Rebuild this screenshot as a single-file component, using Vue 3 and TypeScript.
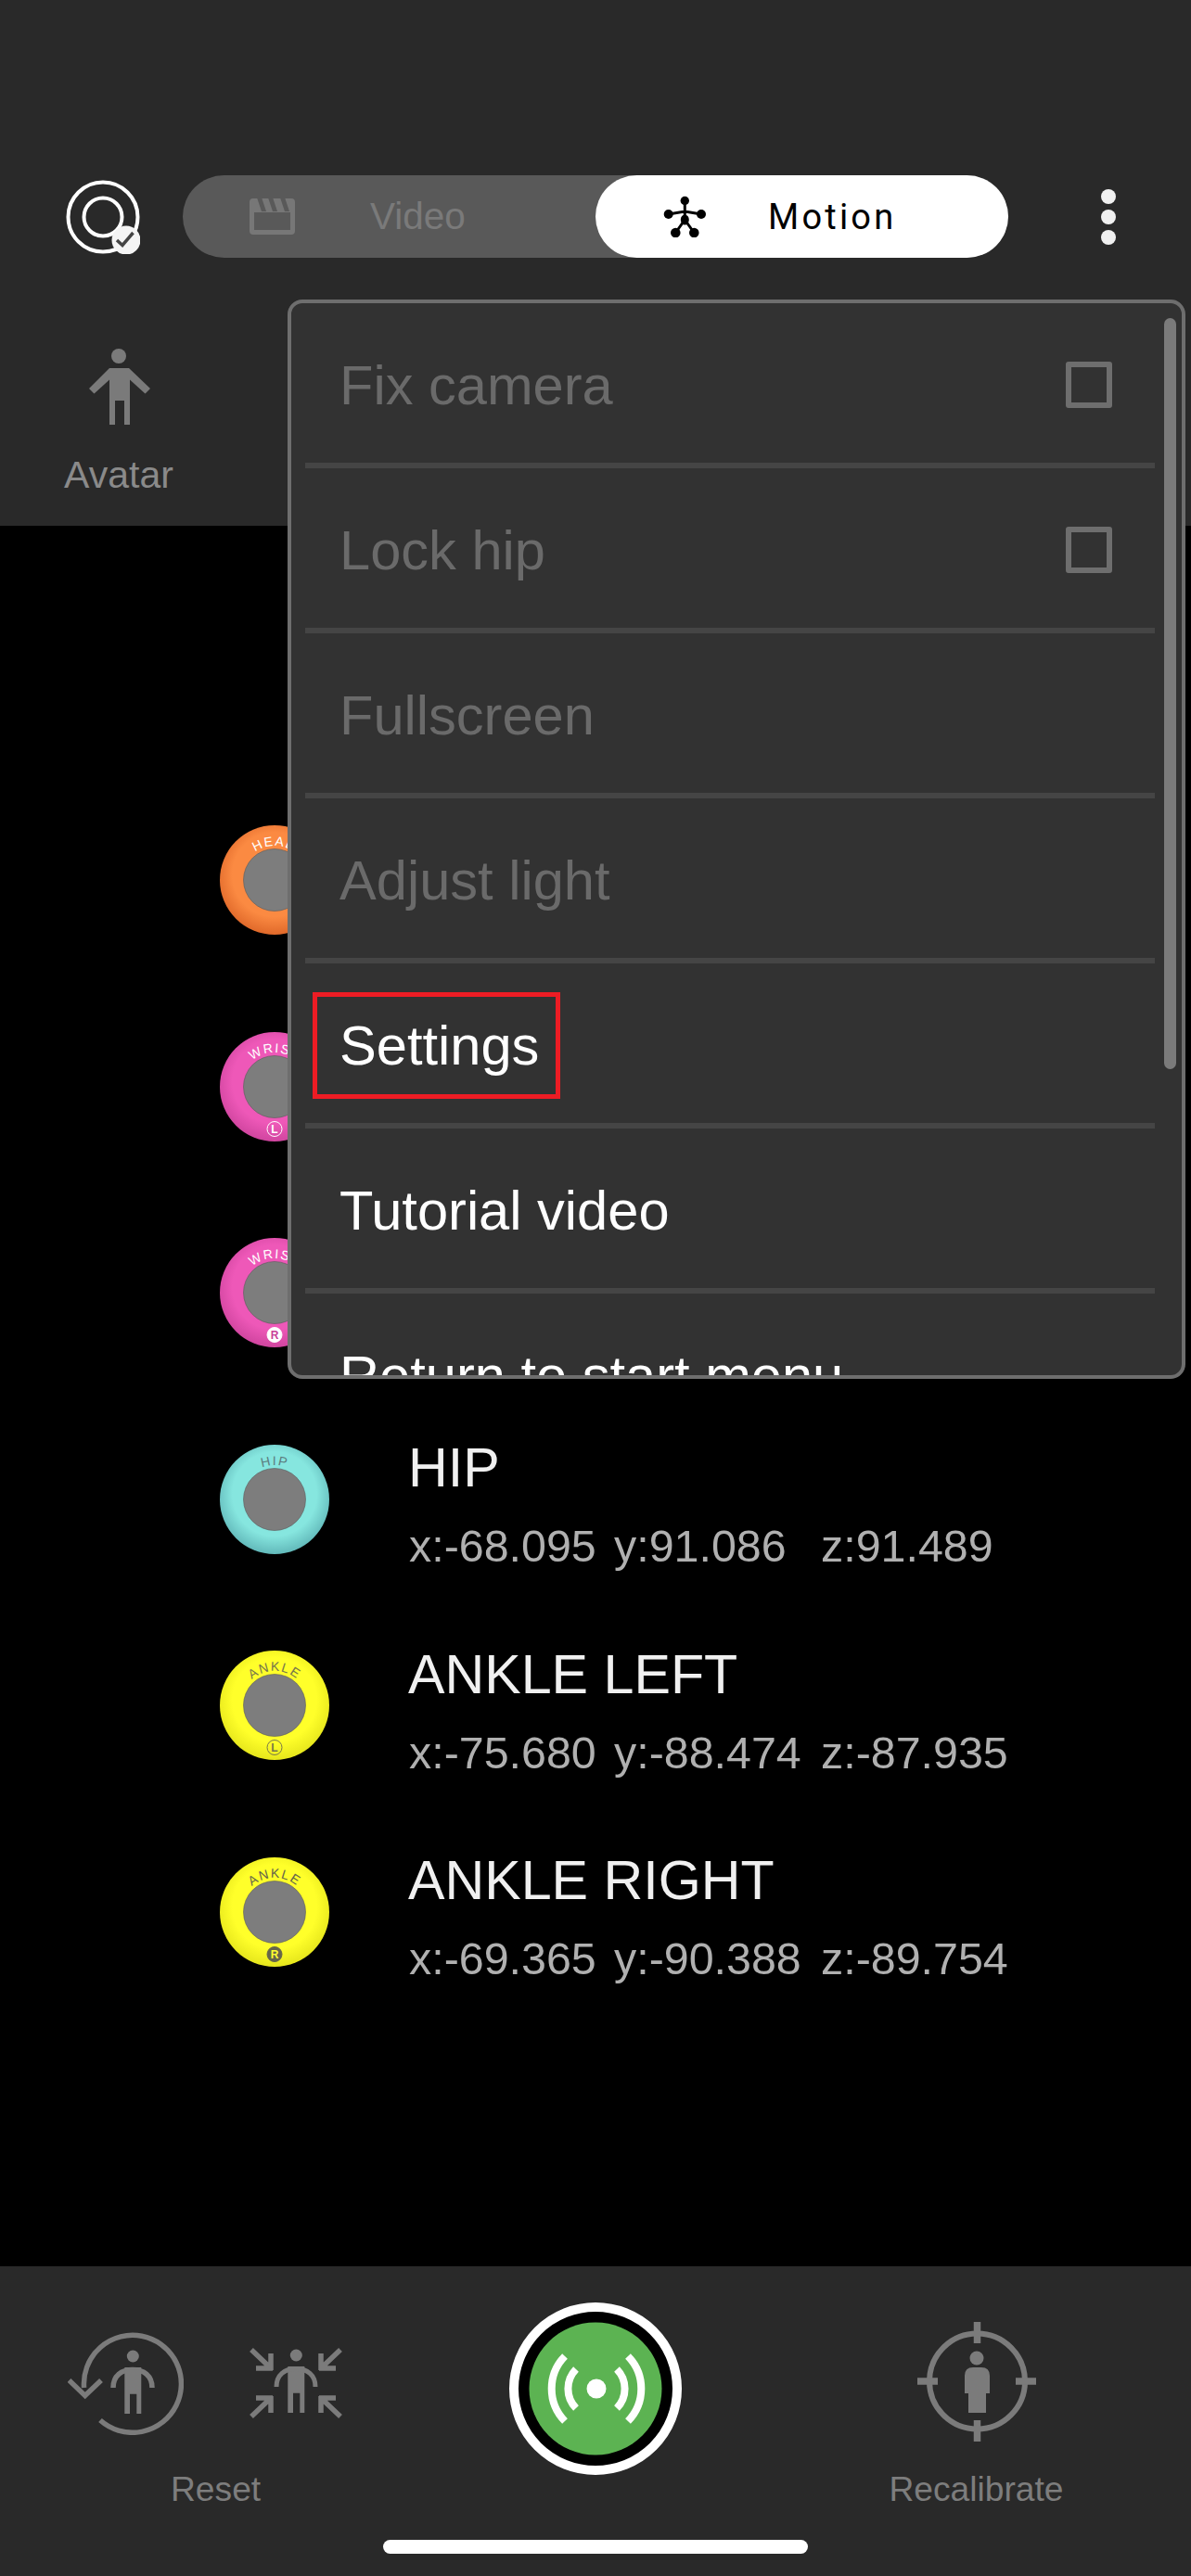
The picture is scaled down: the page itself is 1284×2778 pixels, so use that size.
<script setup lang="ts">
type Sensor = {
  id: string
  name: string
  label: string
  side: string
  coords?: [string, string, string]
  light: string
  edge: string
  ink: string
}

// the first three rows sit under the open menu, so only their pucks show
const sensors: Sensor[] = [
  { id: 'head', name: '', label: 'HEAD', side: '', light: '#fb8a42', edge: '#e0692a', ink: '#ffffff' },
  { id: 'wl', name: '', label: 'WRIST', side: 'L', light: '#ee58b8', edge: '#d0459f', ink: '#ffffff' },
  { id: 'wr', name: '', label: 'WRIST', side: 'R', light: '#ee58b8', edge: '#d0459f', ink: '#ffffff' },
  { id: 'hip', name: 'HIP', label: 'HIP', side: '', coords: ['-68.095', '91.086', '91.489'], light: '#86e6df', edge: '#62b9ba', ink: '#5d7d80' },
  { id: 'al', name: 'ANKLE LEFT', label: 'ANKLE', side: 'L', coords: ['-75.680', '-88.474', '-87.935'], light: '#ffff2a', edge: '#e6e61c', ink: '#77774a' },
  { id: 'ar', name: 'ANKLE RIGHT', label: 'ANKLE', side: 'R', coords: ['-69.365', '-90.388', '-89.754'], light: '#ffff2a', edge: '#e6e61c', ink: '#66664a' },
]

const menuItems = [
  { text: 'Fix camera', disabled: true, check: true },
  { text: 'Lock hip', disabled: true, check: true },
  { text: 'Fullscreen', disabled: true, check: false },
  { text: 'Adjust light', disabled: true, check: false },
  { text: 'Settings', disabled: false, check: false, marked: true },
  { text: 'Tutorial video', disabled: false, check: false },
  { text: 'Return to start menu', disabled: false, check: false },
]
</script>

<template>
  <div class="screen">
    <header class="top">
      <div class="toolbar">
        <svg class="logo" viewBox="71 194 80 80" width="80" height="80">
          <circle cx="111" cy="234" r="37.500" fill="none" stroke="#fff" stroke-width="4" />
          <circle cx="111" cy="234" r="20.500" fill="none" stroke="#fff" stroke-width="4" />
          <circle cx="136" cy="259" r="15.500" fill="#f4f4f4" />
          <path d="M126 259l6 5.500 11.500-13.500" fill="none" stroke="#444" stroke-width="3.500" />
        </svg>

        <div class="switch">
          <div class="tab tab-video">
            <svg viewBox="268 212 51 41" width="51" height="41">
              <path d="M273 213h41q4 0 4 4v31q0 4-4 4h-41q-4 0-4-4v-31q0-4 4-4zM274 228v19h39v-19z" fill="#777" fill-rule="evenodd" />
              <path d="M277 212h5l5 15h-5zM289 212h5l5 15h-5zM302 212h5l5 15h-5z" fill="#595959" />
            </svg>
            <span>Video</span>
          </div>
          <div class="tab tab-motion">
            <svg viewBox="715 210 47 45" width="47" height="45">
              <g fill="#000">
                <circle cx="738.300" cy="215.500" r="4.700" />
                <circle cx="720.700" cy="230" r="5" />
                <circle cx="756" cy="230" r="5" />
                <ellipse cx="738.300" cy="236" rx="4.500" ry="5.500" />
                <circle cx="728.300" cy="250" r="5.300" />
                <circle cx="748.300" cy="250" r="5.300" />
              </g>
              <path d="M738.300 215v21M720.700 230l17.600-3 17.700 3M738.300 236l-10 14M738.300 236l10 14" fill="none" stroke="#000" stroke-width="3" />
            </svg>
            <span>Motion</span>
          </div>
        </div>

        <div class="more">
          <i></i>
          <i></i>
          <i></i>
        </div>
      </div>

      <div class="avatar">
        <svg viewBox="95 376 67 82" width="67" height="82">
          <circle cx="128" cy="384" r="8" fill="#7a7a7a" />
          <path d="M118 397h21l23 22-5.500 5.500-16.500-15v48.500h-6v-26h-10v26h-6v-48.500l-16.500 15-5.500-5.500z" fill="#7a7a7a" />
        </svg>
        <span>Avatar</span>
      </div>
    </header>

    <main class="list">
      <div v-for="s in sensors" :key="s.id" class="sensor">
        <svg class="puck" viewBox="0 0 118 118" width="118" height="118">
          <defs>
            <radialGradient :id="'shade-' + s.id" cx="50%" cy="45%" r="55%">
              <stop offset="70%" :stop-color="s.light" />
              <stop offset="100%" :stop-color="s.edge" />
            </radialGradient>
            <path :id="'arc-' + s.id" d="M22 59A37 37 0 0 1 96 59" />
          </defs>
          <circle cx="59" cy="59" r="59" :fill="'url(#shade-' + s.id + ')'" />
          <circle cx="59" cy="59" r="33.500" fill="#7d7d7d" stroke="#5a5a5a" stroke-width="0.600" />
          <text class="puck-label" :fill="s.ink">
            <textPath :href="'#arc-' + s.id" startOffset="50%" text-anchor="middle">{{ s.label }}</textPath>
          </text>
          <g v-if="s.side">
            <circle
              cx="59"
              cy="104.500"
              r="8"
              :fill="s.side === 'R' ? s.ink : 'none'"
              :stroke="s.ink"
              stroke-width="1"
            />
            <text
              class="puck-side"
              x="59"
              y="109"
              text-anchor="middle"
              :fill="s.side === 'R' ? (s.ink === '#ffffff' ? '#c93f98' : '#ffff30') : s.ink"
            >{{ s.side }}</text>
          </g>
        </svg>
        <div v-if="s.coords" class="sensor-text">
          <div class="sensor-name">{{ s.name }}</div>
          <div class="coords">
            <span class="cx">x:{{ s.coords[0] }}</span>
            <span class="cy">y:{{ s.coords[1] }}</span>
            <span>z:{{ s.coords[2] }}</span>
          </div>
        </div>
      </div>
    </main>

    <footer class="bottom">
      <div class="reset">
        <div class="reset-icons">
          <svg viewBox="73 2515 125 111" width="125" height="111">
            <g fill="none" stroke="#7b7b7b" stroke-width="5.500">
              <path d="M90.600 2575A52.500 52.500 0 1 1 108 2610" />
              <path d="M74.500 2567l17.200 16.500 17.300-16.500" />
              <path d="M122 2575c0-13 9-19.500 21-19.500s21 6.500 21 19.500" />
            </g>
            <circle cx="143.300" cy="2541" r="6.500" fill="#7b7b7b" />
            <path d="M134.300 2553h18v50h-5v-21.300h-7.300v21.300h-5.700z" fill="#7b7b7b" />
          </svg>
          <svg viewBox="270 2533 100 77" width="100" height="77">
            <g transform="translate(177 0)">
              <circle cx="143.300" cy="2541" r="6.500" fill="#7b7b7b" />
              <path d="M134.300 2553h18v50h-5v-21.300h-7.300v21.300h-5.700z" fill="#7b7b7b" />
              <path d="M122 2575c0-13 9-19.500 21-19.500s21 6.500 21 19.500" fill="none" stroke="#7b7b7b" stroke-width="5" />
            </g>
            <g fill="none" stroke="#7b7b7b" stroke-width="5.500">
              <path d="M272 2535l20 19M277 2555h18M293 2539v18" />
              <path d="M368 2535l-20 19M363 2555h-18M347 2539v18" />
              <path d="M272 2607l20-19M277 2587h18M293 2585v18" />
              <path d="M368 2607l-20-19M363 2587h-18M347 2585v18" />
            </g>
          </svg>
        </div>
        <span class="tool-label reset-label">Reset</span>
      </div>

      <div class="record">
        <svg viewBox="0 0 186 186" width="186" height="186">
          <circle cx="93" cy="93" r="88" fill="#000" stroke="#fff" stroke-width="10" />
          <circle cx="93" cy="93" r="71.500" fill="#5cb352" />
          <circle cx="94" cy="93" r="10.500" fill="#fff" />
          <g fill="none" stroke="#fff" stroke-width="8">
            <path d="M60 58a50 50 0 0 0 0 70M128 58a50 50 0 0 1 0 70" />
            <path d="M72 72a30 30 0 0 0 0 42M116 72a30 30 0 0 1 0 42" />
          </g>
        </svg>
      </div>

      <div class="recal">
        <svg viewBox="988 2504 128 129" width="128" height="129">
          <circle cx="1052.500" cy="2568" r="51.500" fill="none" stroke="#7b7b7b" stroke-width="6" />
          <path d="M1052.500 2504v23M1052.500 2610v23M988 2568h22M1094 2568h22" stroke="#7b7b7b" stroke-width="7.500" />
          <ellipse cx="1052" cy="2543" rx="7.500" ry="7.500" fill="#7b7b7b" />
          <path d="M1039 2562q0-9 9-9h9q9 0 9 9v19h-4v21h-19v-21h-4z" fill="#7b7b7b" />
        </svg>
        <span class="tool-label">Recalibrate</span>
      </div>

      <div class="home-bar"></div>
    </footer>

    <section class="menu">
      <div
        v-for="item in menuItems"
        :key="item.text"
        class="menu-row"
        :class="{ off: item.disabled }"
      >
        <span :class="{ marked: item.marked }">{{ item.text }}</span>
        <span v-if="item.check" class="box"></span>
      </div>
      <div class="scroll-thumb"></div>
    </section>
  </div>
</template>

<style scoped>
.screen {
  position: relative;
  display: flex;
  flex-direction: column;
  width: 1284px;
  height: 2778px;
  overflow: hidden;
  background: #000;
  font-family: 'Liberation Sans', Arial, sans-serif;
}

.top {
  height: 567px;
  background: #292929;
}

.toolbar {
  display: flex;
  align-items: center;
  height: 89px;
  padding: 189px 0 0 71px;
}

.logo {
  flex: none;
}

.switch {
  display: flex;
  width: 890px;
  height: 89px;
  margin-left: 46px;
  background: #595959;
  border-radius: 45px;
}

.tab {
  display: flex;
  align-items: center;
  height: 89px;
}

.tab-video {
  width: 445px;
  padding-left: 71px;
  box-sizing: border-box;
  color: #7a7a7a;
  font-size: 40.500px;
}

.tab-video span {
  margin-left: 80px;
}

.tab-motion {
  width: 445px;
  padding-left: 73px;
  box-sizing: border-box;
  background: #fff;
  border-radius: 45px;
  color: #000;
  font-family: Roboto, 'Liberation Sans', sans-serif;
  font-size: 38px;
  letter-spacing: 3.200px;
}

.tab-motion span {
  margin-left: 66px;
}

.more {
  display: flex;
  flex-direction: column;
  gap: 6px;
  margin-left: 100px;
}

.more i {
  display: block;
  width: 16px;
  height: 16px;
  border-radius: 50%;
  background: #f0f0f0;
}

.avatar {
  display: flex;
  flex-direction: column;
  align-items: center;
  width: 118px;
  margin: 98px 0 0 69px;
  color: #8a8a8a;
  font-size: 41px;
}

.avatar span {
  margin-top: 31px;
  line-height: 46px;
}

.list {
  flex: 1;
  padding: 271px 0 0 237px;
}

.sensor {
  display: flex;
  align-items: center;
  height: 222.500px;
}

.puck {
  flex: none;
}

.puck-label {
  font-size: 14px;
  letter-spacing: 1.500px;
}

.puck-side {
  font-size: 12px;
  font-weight: 700;
}

.sensor-text {
  margin-left: 85px;
  padding-top: 12px;
}

.sensor-name {
  color: #f0f0f0;
  font-size: 59.200px;
  line-height: 70px;
}

.coords {
  display: flex;
  margin-top: 19px;
  padding-left: 1px;
  color: #b0b0b0;
  font-size: 48.400px;
  line-height: 60px;
  white-space: nowrap;
}

.cx {
  width: 221px;
}

.cy {
  width: 223px;
}

.bottom {
  position: relative;
  display: flex;
  align-items: flex-start;
  height: 334px;
  padding-left: 73px;
  box-sizing: border-box;
  background: #292929;
}

.reset {
  display: flex;
  flex-direction: column;
  width: 296px;
  padding-top: 71px;
}

.reset-icons {
  display: flex;
  align-items: center;
  justify-content: space-between;
  height: 111px;
}

.tool-label {
  color: #7d7d7d;
  font-size: 37.200px;
  line-height: 42px;
}

.reset-label {
  margin: 37px 0 0 111px;
}

.record {
  margin: 39px 0 0 180px;
}

.record svg,
.recal svg {
  display: block;
}

.recal {
  display: flex;
  flex-direction: column;
  align-items: center;
  width: 185px;
  margin: 60px 0 0 225px;
}

.recal .tool-label {
  margin-top: 30px;
  white-space: nowrap;
}

.home-bar {
  position: absolute;
  left: 413px;
  bottom: 24px;
  width: 458px;
  height: 15px;
  border-radius: 8px;
  background: #fff;
}

.menu {
  position: absolute;
  left: 310px;
  top: 323px;
  width: 968px;
  height: 1164px;
  padding: 0 29px 0 15px;
  box-sizing: border-box;
  overflow: hidden;
  background: #323232;
  border: 4px solid #6e6e6e;
  border-radius: 16px;
}

.menu-row {
  display: flex;
  align-items: center;
  justify-content: space-between;
  height: 178px;
  padding: 5px 46px 0 37px;
  box-sizing: border-box;
  border-bottom: 6px solid #454545;
  color: #fff;
  font-size: 59.600px;
}

.menu-row.off {
  color: #6a6a6a;
}

.marked {
  display: block;
  margin-left: -29px;
  padding: 0 18px 0 24px;
  border: 5px solid #ed1c24;
  line-height: 105px;
}

.box {
  width: 50px;
  height: 50px;
  margin-top: -2px;
  box-sizing: border-box;
  border: 6px solid #6e6e6e;
  border-radius: 3px;
}

.scroll-thumb {
  position: absolute;
  left: 941px;
  top: 16px;
  width: 13px;
  height: 810px;
  border-radius: 7px;
  background: #7b7b7b;
}
</style>

<style>
body {
  margin: 0;
  background: #000;
}
</style>
